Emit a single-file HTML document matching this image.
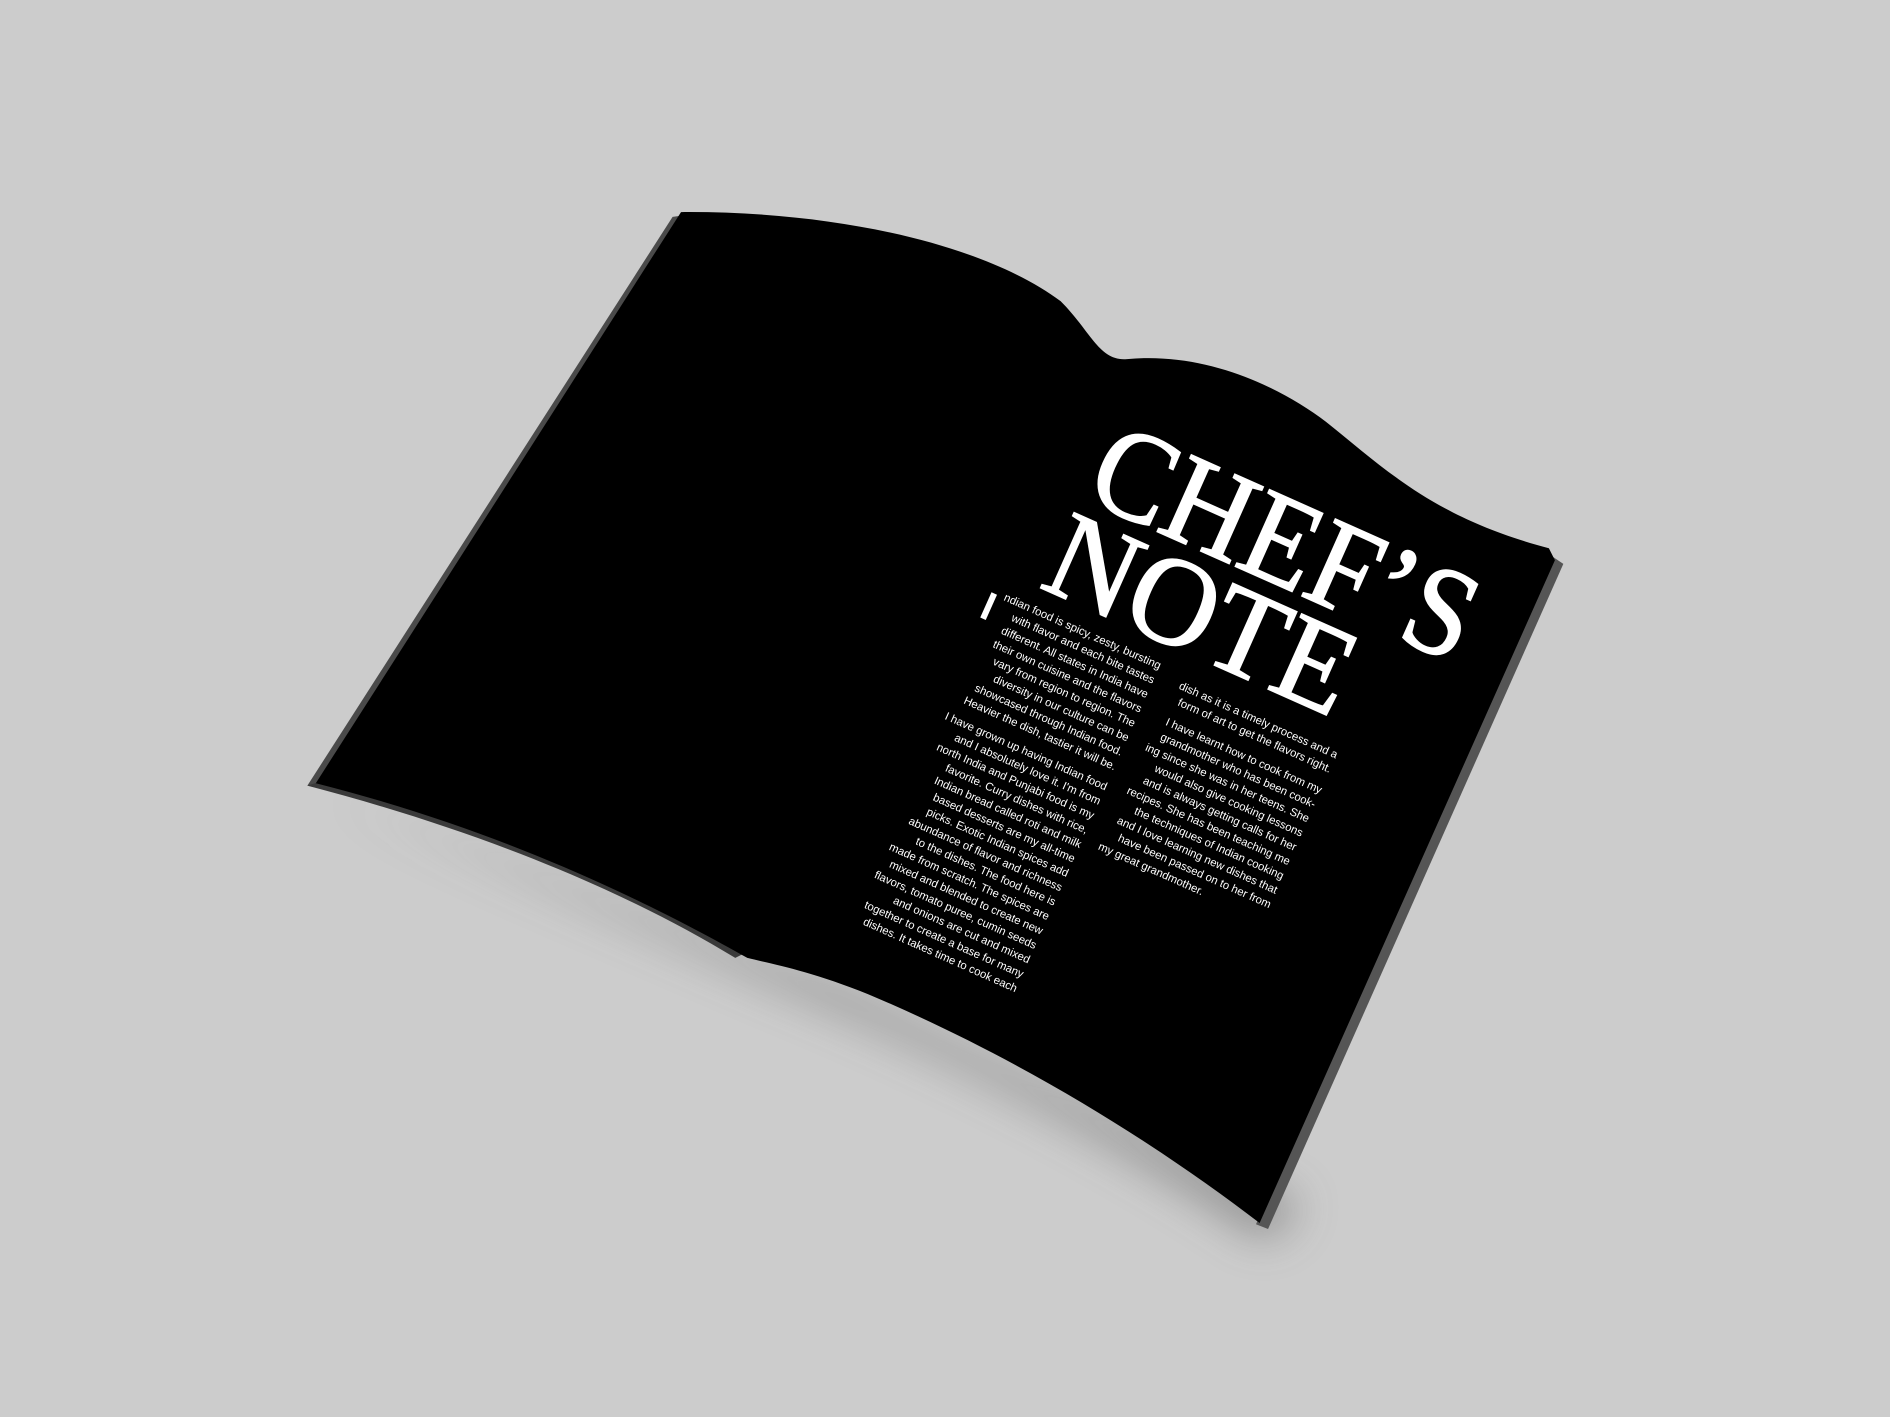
<!DOCTYPE html>
<html><head><meta charset="utf-8"><style>
html,body{margin:0;padding:0;background:#cccccc;}
svg{display:block}
</style></head><body>
<svg width="1890" height="1417" viewBox="0 0 1568 1176" preserveAspectRatio="none" xmlns="http://www.w3.org/2000/svg">
<defs>
<filter id="sh" x="-20%" y="-20%" width="140%" height="140%"><feGaussianBlur stdDeviation="18"/></filter>
</defs>
<rect width="1568" height="1176" fill="#cccccc"/>
<path d="M275 660 C420 720 560 780 640 815 C800 880 950 960 1050 1030 L1080 1000 L700 820 Z" fill="#555" opacity="0.5" filter="url(#sh)"/>
<path d="M558 180 L572 178 L268 655 L255 652 Z" fill="#4a4a4a"/>
<path d="M1288 462 L1297 468 L1052 1020 L1042 1016 Z" fill="#555"/>
<path d="M255 652 C400 690 520 740 610 795 L620 790 C520 735 400 688 268 648 Z" fill="#3a3a3a"/>
<path d="M565 176 C700 175 820 205 880 250 C905 275 912 300 935 298 C1000 292 1060 320 1100 350 C1150 390 1190 430 1285 455 L1290 465 L1045 1015 C960 950 850 880 720 825 C670 805 640 800 620 795 C540 750 420 690 262 650 Z" fill="#000"/>
<g transform="translate(830 497) rotate(24)" fill="#fff" font-family="'Liberation Sans',sans-serif" font-size="9.4" text-anchor="end">
<text x="28" y="-104" font-family="'Liberation Serif',serif" font-size="106" text-anchor="start" textLength="338" lengthAdjust="spacingAndGlyphs" stroke="#fff" stroke-width="1.5">CHEF’S</text>
<text x="24" y="-22" font-family="'Liberation Serif',serif" font-size="104" text-anchor="start" textLength="268" lengthAdjust="spacingAndGlyphs" stroke="#fff" stroke-width="1.5">NOTE</text>
<rect x="-9" y="-2" width="5" height="23"/>
<text x="144" y="0">ndian food is spicy, zesty, bursting</text>
<text x="144" y="13.1">with flavor and each bite tastes</text>
<text x="144" y="26.2">different. All states in India have</text>
<text x="144" y="39.3">their own cuisine and the flavors</text>
<text x="144" y="52.4">vary from region to region. The</text>
<text x="144" y="65.5">diversity in our culture can be</text>
<text x="144" y="78.6">showcased through Indian food.</text>
<text x="144" y="91.7">Heavier the dish, tastier it will be.</text>
<text x="144" y="110">I have grown up having Indian food</text>
<text x="144" y="123.1">and I absolutely love it. I'm from</text>
<text x="144" y="136.2">north India and Punjabi food is my</text>
<text x="144" y="149.3">favorite. Curry dishes with rice,</text>
<text x="144" y="162.4">Indian bread called roti and milk</text>
<text x="144" y="175.5">based desserts are my all-time</text>
<text x="144" y="188.6">picks. Exotic Indian spices add</text>
<text x="144" y="201.7">abundance of flavor and richness</text>
<text x="144" y="214.8">to the dishes. The food here is</text>
<text x="144" y="227.9">made from scratch. The spices are</text>
<text x="144" y="241">mixed and blended to create new</text>
<text x="144" y="254.1">flavors, tomato puree, cumin seeds</text>
<text x="144" y="267.2">and onions are cut and mixed</text>
<text x="144" y="280.3">together to create a base for many</text>
<text x="144" y="293.4">dishes. It takes time to cook each</text>
<text x="308" y="8">dish as it is a timely process and a</text>
<text x="308" y="21">form of art to get the flavors right.</text>
<text x="308" y="40">I have learnt how to cook from my</text>
<text x="308" y="53">grandmother who has been cook-</text>
<text x="308" y="66">ing since she was in her teens. She</text>
<text x="308" y="79">would also give cooking lessons</text>
<text x="308" y="92">and is always getting calls for her</text>
<text x="308" y="105">recipes. She has been teaching me</text>
<text x="308" y="118">the techniques of Indian cooking</text>
<text x="308" y="131">and I love learning new dishes that</text>
<text x="308" y="144">have been passed on to her from</text>
<text x="158" y="157" text-anchor="start">my great grandmother.</text>
</g>
</svg>
</body></html>
